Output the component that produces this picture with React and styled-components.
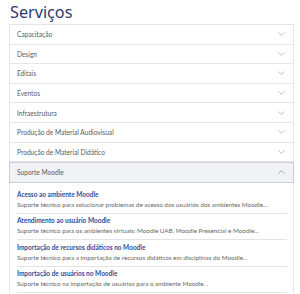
import React from "react";
import styled, { createGlobalStyle } from "styled-components";

const Global = createGlobalStyle`
  html, body { margin: 0; padding: 0; background: #fff; }
  body { font-family: Lato, "Open Sans", sans-serif; }
`;

const Page = styled.div`
  padding: 2px 6px 0 9px;
  width: 300px;
  box-sizing: border-box;
`;

const Title = styled.h1`
  margin: 0 0 2px 1px;
  font-family: "Noto Sans", sans-serif;
  font-weight: 400;
  font-size: 16.2px;
  line-height: 20px;
  color: #2c3b6b;
`;

const Accordion = styled.div`
  border-top: 1px solid #e4e4e4;
`;

const Header = styled.div`
  display: flex;
  align-items: center;
  justify-content: space-between;
  height: 18.6px;
  padding: 0 8px 0 7px;
  border: 1px solid ${(p) => (p.$open ? "#c9cdd9" : "#e6e6e6")};
  border-top: ${(p) => (p.$open ? "1px solid #c9cdd9" : "none")};
  background: ${(p) => (p.$open ? "#f1f2f6" : "#fff")};
  font-size: 6.6px;
  color: #5a5a5a;
`;

const Chevron = ({ up }) => (
  <svg width="7" height="4" viewBox="0 0 7 4" style={{ display: "block" }}>
    <path
      d={up ? "M0.5 3.5 L3.5 0.7 L6.5 3.5" : "M0.5 0.5 L3.5 3.3 L6.5 0.5"}
      fill="none"
      stroke={up ? "#7a829b" : "#a5a5a5"}
      strokeWidth="0.7"
    />
  </svg>
);

const Body = styled.div`
  border-left: 1px solid #e6e6e6;
  border-right: 1px solid #e6e6e6;
  padding: 4.5px 6px 0 7px;
`;

const Item = styled.div`
  padding: 2.5px 0 3px;
  border-bottom: 1px solid #e3e3e3;
`;

const ItemTitle = styled.div`
  font-size: 6.5px;
  line-height: 10px;
  font-weight: 700;
  color: #2f4d99;
  white-space: nowrap;
`;

const ItemDesc = styled.div`
  font-size: 6.3px;
  line-height: 10px;
  color: #666;
  white-space: nowrap;
  overflow: hidden;
`;

const sections = [
  "Capacitação",
  "Design",
  "Editais",
  "Eventos",
  "Infraestrutura",
  "Produção de Material Audiovisual",
  "Produção de Material Didático",
];

const items = [
  ["Acesso ao ambiente Moodle", "Suporte técnico para solucionar problemas de acesso dos usuários dos ambientes Moodle..."],
  ["Atendimento ao usuário Moodle", "Suporte técnico para os ambientes virtuais: Moodle UAB, Moodle Presencial e Moodle..."],
  ["Importação de recursos didáticos no Moodle", "Suporte técnico para a importação de recursos didáticos em disciplinas do Moodle..."],
  ["Importação de usuários no Moodle", "Suporte técnico na importação de usuários para o ambiente Moodle.      ."],
];

export default function App() {
  return (
    <>
      <Global />
      <Page>
        <Title>Serviços</Title>
        <Accordion>
          {sections.map((s) => (
            <Header key={s}>
              <span>{s}</span>
              <Chevron />
            </Header>
          ))}
          <Header $open>
            <span>Suporte Moodle</span>
            <Chevron up />
          </Header>
          <Body>
            {items.map(([t, d]) => (
              <Item key={t}>
                <ItemTitle>{t}</ItemTitle>
                <ItemDesc>{d}</ItemDesc>
              </Item>
            ))}
          </Body>
        </Accordion>
      </Page>
    </>
  );
}
